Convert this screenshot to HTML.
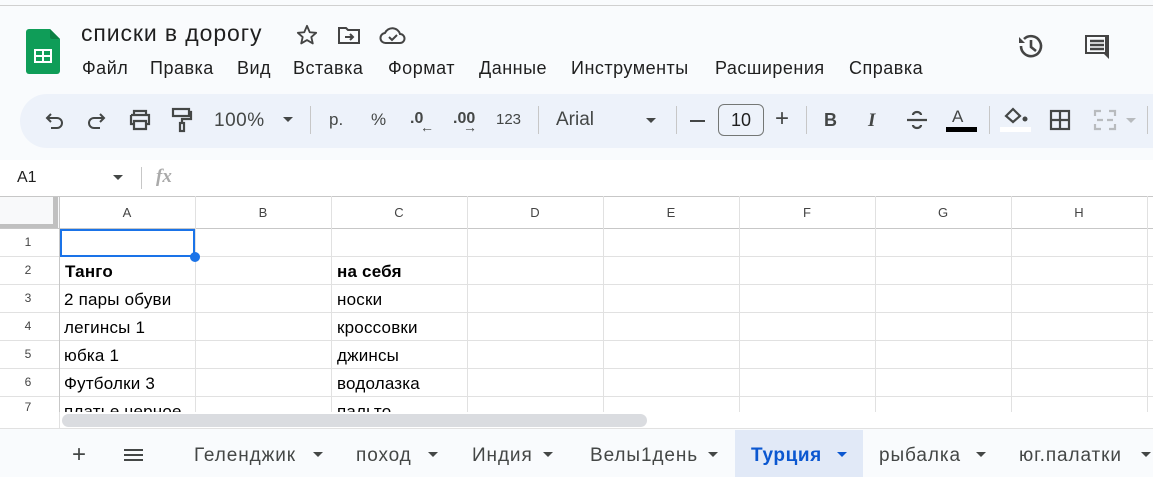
<!DOCTYPE html>
<html><head><meta charset="utf-8"><style>
*{margin:0;padding:0;box-sizing:border-box}
body{width:1153px;height:477px;overflow:hidden;background:#f9fbfd;font-family:"Liberation Sans",Arial,sans-serif;color:#1f1f1f;position:relative}
.abs{position:absolute}
.m{position:absolute;top:58px;font-size:18px;color:#1f1f1f;letter-spacing:0.5px;white-space:nowrap}
.tb{position:absolute;top:94px;left:20px;width:1160px;height:54px;background:#edf2fa;border-radius:27px}
.t{position:absolute;font-size:17px;color:#444746;top:110px}
.sep{position:absolute;top:106px;width:1px;height:28px;background:#c7c7c7}
.grid{position:absolute;left:0;top:196px;width:1153px;height:216px;background:#fff;overflow:hidden}
.vl{position:absolute;top:0;width:1px;height:216px;background:#e1e1e1}
.hl{position:absolute;left:0;width:1153px;height:1px;background:#e1e1e1}
.ch{position:absolute;top:9px;font-size:13px;color:#444;width:136px;text-align:center}
.rn{position:absolute;left:0;width:56px;text-align:center;font-size:12px;color:#444}
.c{position:absolute;font-size:17px;color:#000;letter-spacing:0.2px;white-space:nowrap}
.tab{position:absolute;top:445px;font-size:19px;color:#444746;letter-spacing:0.9px;white-space:nowrap}
.ar{position:absolute;top:452px;width:0;height:0;border-left:5px solid transparent;border-right:5px solid transparent;border-top:5px solid #444746}
</style></head><body>
<div class="abs" style="left:0;top:5px;width:1153px;height:1px;background:#d0d0d0"></div>
<svg class="abs" style="left:26px;top:29px" width="34" height="45" viewBox="0 0 34 45"><path d="M3 0h21l10 10v32a3 3 0 0 1-3 3H3a3 3 0 0 1-3-3V3a3 3 0 0 1 3-3z" fill="#0f9d58"/><path d="M24 0l10 10H26a2 2 0 0 1-2-2z" fill="#0b8043"/><rect x="8" y="20" width="18" height="14" fill="#fff"/><rect x="10" y="22" width="6" height="4" fill="#0f9d58"/><rect x="18" y="22" width="6" height="4" fill="#0f9d58"/><rect x="10" y="28" width="6" height="4" fill="#0f9d58"/><rect x="18" y="28" width="6" height="4" fill="#0f9d58"/></svg>
<div class="abs" style="left:81px;top:20px;font-size:23px;letter-spacing:0.9px;color:#1f1f1f;white-space:nowrap">списки в дорогу</div>
<svg class="abs" style="left:295px;top:24px" width="24" height="22" viewBox="0 0 24 24" fill="none" stroke="#444" stroke-width="2" stroke-linejoin="round"><path d="M12 2l3 7 7 .6-5.3 4.6 1.6 7L12 17.5 5.7 21.2l1.6-7L2 9.6 9 9z"/></svg>
<svg class="abs" style="left:337px;top:26px" width="24" height="20" viewBox="0 0 24 20" fill="none" stroke="#444" stroke-width="2"><path d="M2 2h7l2 2h11v13H2z"/><path d="M8 11h8M13 8l3 3-3 3"/></svg>
<svg class="abs" style="left:379px;top:25px" width="28" height="20" viewBox="0 0 28 20" fill="none" stroke="#444" stroke-width="2"><path d="M7 18a5 5 0 0 1-1-10 8 8 0 0 1 15 1 4.5 4.5 0 0 1 0 9z"/><path d="M10 12l3 3 5-5"/></svg>
<div class="m" style="left:82px">Файл</div><div class="m" style="left:150px">Правка</div><div class="m" style="left:237px">Вид</div><div class="m" style="left:293px">Вставка</div><div class="m" style="left:388px">Формат</div><div class="m" style="left:479px">Данные</div><div class="m" style="left:571px">Инструменты</div><div class="m" style="left:715px">Расширения</div><div class="m" style="left:849px">Справка</div>
<svg class="abs" style="left:1016px;top:32px" width="30" height="28" viewBox="0 0 30 28" fill="none" stroke="#444" stroke-width="2.6"><path d="M5 14a10 10 0 1 0 3-7"/><path d="M3 5v6h6" fill="#444" stroke="none"/><path d="M15 8v7l5 4"/></svg>
<svg class="abs" style="left:1083px;top:33px" width="28" height="28" viewBox="0 0 28 28"><path d="M2 2h24v24l-5-5H2zM4 4v15h18V4z" fill="#444"/><path d="M7 8h14M7 12h14M7 16h14" stroke="#444" stroke-width="2.4"/></svg>
<div class="tb"></div>
<svg class="abs" style="left:45px;top:112px" width="20" height="18" viewBox="0 0 20 18" fill="none" stroke="#444746" stroke-width="2"><path d="M6 2L2 6l4 4"/><path d="M2 6h10a5 5 0 0 1 0 10H6"/></svg>
<svg class="abs" style="left:86px;top:112px" width="20" height="18" viewBox="0 0 20 18" fill="none" stroke="#444746" stroke-width="2"><path d="M14 2l4 4-4 4"/><path d="M18 6H8a5 5 0 0 0 0 10h6"/></svg>
<svg class="abs" style="left:128px;top:109px" width="24" height="22" viewBox="0 0 24 22" fill="none" stroke="#444746" stroke-width="2.2"><path d="M6 6V2h12v4M3 6h18v9h-3M6 15H3V6M6 12h12v8H6z"/></svg>
<svg class="abs" style="left:171px;top:107px" width="22" height="26" viewBox="0 0 22 26" fill="none" stroke="#444746" stroke-width="2.2"><rect x="2" y="2" width="16" height="7"/><path d="M18 5h2v7h-9v4"/><rect x="9" y="16" width="4" height="8"/></svg>
<div class="t" style="left:214px;font-size:19px;letter-spacing:0.5px">100%</div>
<div class="abs" style="left:283px;top:117px;border-left:5px solid transparent;border-right:5px solid transparent;border-top:5px solid #444746"></div>
<div class="sep" style="left:310px"></div>
<div class="t" style="left:329px">р.</div>
<div class="t" style="left:371px">%</div>
<div class="t" style="left:410px;font-weight:bold;font-size:16px">.0</div>
<div class="t" style="left:420px;top:119px;font-size:14px">←</div>
<div class="t" style="left:453px;font-weight:bold;font-size:16px">.00</div>
<div class="t" style="left:463px;top:119px;font-size:14px">→</div>
<div class="t" style="left:496px;font-size:15px;top:111px">123</div>
<div class="sep" style="left:538px"></div>
<div class="t" style="left:556px;font-size:19px;top:109px">Arial</div>
<div class="abs" style="left:646px;top:118px;border-left:5px solid transparent;border-right:5px solid transparent;border-top:5px solid #444746"></div>
<div class="sep" style="left:676px"></div>
<div class="abs" style="left:690px;top:120px;width:15px;height:2px;background:#444746"></div>
<div class="abs" style="left:718px;top:104px;width:46px;height:32px;border:1px solid #747775;border-radius:6px;font-size:18px;text-align:center;line-height:30px;color:#1f1f1f">10</div>
<div class="t" style="left:775px;font-size:24px;top:105px">+</div>
<div class="sep" style="left:806px"></div>
<div class="t" style="left:824px;font-weight:bold;font-size:18px">B</div>
<div class="t" style="left:868px;font-weight:bold;font-style:italic;font-size:19px;font-family:'Liberation Serif',serif">I</div>
<svg class="abs" style="left:906px;top:110px" width="22" height="20" viewBox="0 0 22 20" fill="none" stroke="#444746" stroke-width="2.2"><path d="M1 10h20M15 5a4 3 0 0 0-8 0M7 15a4 3 0 0 0 8 0"/></svg>
<div class="t" style="left:952px;font-size:17px;top:107px">A</div>
<div class="abs" style="left:946px;top:127px;width:31px;height:5px;background:#000"></div>
<div class="sep" style="left:989px"></div>
<svg class="abs" style="left:1002px;top:106px" width="28" height="18" viewBox="0 0 28 18"><path d="M4 10l7-7 7 7-7 6z" fill="none" stroke="#444746" stroke-width="2.2"/><circle cx="23" cy="13" r="2.5" fill="#444746"/></svg>
<div class="abs" style="left:1000px;top:127px;width:31px;height:5px;background:#fff"></div>
<svg class="abs" style="left:1049px;top:109px" width="22" height="22" viewBox="0 0 22 22" fill="none" stroke="#444746" stroke-width="2.2"><rect x="2" y="2" width="18" height="18"/><path d="M11 2v18M2 11h18"/></svg>
<svg class="abs" style="left:1093px;top:109px" width="24" height="22" viewBox="0 0 24 22" fill="none" stroke="#b8bbbe" stroke-width="2.2"><path d="M2 7V2h6M2 15v5h6M22 7V2h-6M22 15v5h-6M4 11h6M20 11h-6"/></svg>
<div class="abs" style="left:1126px;top:118px;border-left:5px solid transparent;border-right:5px solid transparent;border-top:5px solid #b8bbbe"></div>
<div class="sep" style="left:1147px"></div>
<div class="abs" style="left:0;top:160px;width:1153px;height:36px;background:#fff"></div>
<div class="abs" style="left:17px;top:169px;font-size:16px">A1</div>
<div class="abs" style="left:113px;top:175px;border-left:5px solid transparent;border-right:5px solid transparent;border-top:5px solid #444746"></div>
<div class="abs" style="left:141px;top:167px;width:1px;height:22px;background:#c7c7c7"></div>
<div class="abs" style="left:156px;top:166px;font-size:19px;color:#aaa;font-style:italic;font-weight:bold;font-family:'Liberation Serif',serif">fx</div>
<div class="grid">
<div style="position:absolute;left:0;top:0;width:60px;height:32px;background:#f8f9fa"></div>
<div style="position:absolute;left:53px;top:0;width:5px;height:28px;background:#c0c0c0"></div>
<div style="position:absolute;left:0;top:28px;width:58px;height:4px;background:#c0c0c0"></div>
<div class="hl" style="top:0;background:#c7c7c7"></div>
<div class="hl" style="top:32px;background:#c7c7c7"></div>
<div class="hl" style="top:60px"></div><div class="hl" style="top:88px"></div><div class="hl" style="top:116px"></div><div class="hl" style="top:144px"></div><div class="hl" style="top:172px"></div><div class="hl" style="top:200px"></div>
<div class="vl" style="left:59px;background:#c7c7c7"></div>
<div class="vl" style="left:195px"></div><div class="vl" style="left:331px"></div><div class="vl" style="left:467px"></div><div class="vl" style="left:603px"></div><div class="vl" style="left:739px"></div><div class="vl" style="left:875px"></div><div class="vl" style="left:1011px"></div><div class="vl" style="left:1147px"></div>
<div class="ch" style="left:59px">A</div><div class="ch" style="left:195px">B</div><div class="ch" style="left:331px">C</div><div class="ch" style="left:467px">D</div><div class="ch" style="left:603px">E</div><div class="ch" style="left:739px">F</div><div class="ch" style="left:875px">G</div><div class="ch" style="left:1011px">H</div>
<div class="rn" style="top:39px">1</div><div class="rn" style="top:67px">2</div><div class="rn" style="top:95px">3</div><div class="rn" style="top:123px">4</div><div class="rn" style="top:151px">5</div><div class="rn" style="top:179px">6</div><div class="rn" style="top:204px">7</div>
<div style="position:absolute;left:60px;top:33px;width:135px;height:28px;border:2px solid #1a73e8"></div>
<div style="position:absolute;left:190px;top:56px;width:10px;height:10px;border-radius:50%;background:#1a73e8"></div>
<div class="c" style="left:65px;top:66px;font-weight:bold">Танго</div>
<div class="c" style="left:337px;top:66px;font-weight:bold">на себя</div>
<div class="c" style="left:64px;top:94px">2 пары обуви</div><div class="c" style="left:337px;top:94px">носки</div>
<div class="c" style="left:64px;top:122px">легинсы 1</div><div class="c" style="left:337px;top:122px">кроссовки</div>
<div class="c" style="left:64px;top:150px">юбка 1</div><div class="c" style="left:337px;top:150px">джинсы</div>
<div class="c" style="left:64px;top:178px">Футболки 3</div><div class="c" style="left:337px;top:178px">водолазка</div>
<div class="c" style="left:64px;top:206px">платье черное</div><div class="c" style="left:337px;top:206px">пальто</div>
</div>
<div class="abs" style="left:0;top:412px;width:1153px;height:17px;background:#fff;border-bottom:1px solid #e1e1e1"></div>
<div class="abs" style="left:59px;top:412px;width:1px;height:17px;background:#e1e1e1"></div>
<div class="abs" style="left:62px;top:414px;width:585px;height:13px;border-radius:7px;background:#dadce0"></div>
<div class="abs" style="left:735px;top:430px;width:128px;height:47px;background:#e1e9f7"></div>
<div class="tab" style="left:72px;font-size:24px;top:441px">+</div>
<div class="abs" style="left:124px;top:449px;width:19px;height:2px;background:#444746;box-shadow:0 5px 0 #444746,0 10px 0 #444746"></div>
<div class="tab" style="left:194px">Геленджик</div><div class="ar" style="left:313px"></div>
<div class="tab" style="left:356px">поход</div><div class="ar" style="left:428px"></div>
<div class="tab" style="left:472px">Индия</div><div class="ar" style="left:543px"></div>
<div class="tab" style="left:590px">Велы1день</div><div class="ar" style="left:708px"></div>
<div class="tab" style="left:751px;color:#0b57d0;font-weight:bold;letter-spacing:0.6px">Турция</div><div class="ar" style="left:837px;border-top-color:#0b57d0"></div>
<div class="tab" style="left:879px">рыбалка</div><div class="ar" style="left:976px"></div>
<div class="tab" style="left:1019px">юг.палатки</div><div class="ar" style="left:1141px"></div>
</body></html>
